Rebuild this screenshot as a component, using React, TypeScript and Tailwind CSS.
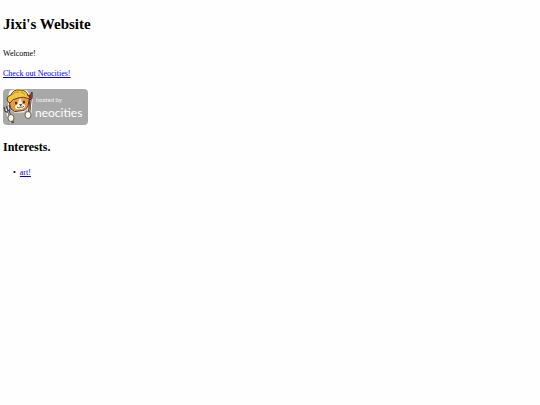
function NeocitiesBadge() {
  return (
    <svg width="85" height="36" viewBox="0 0 85 36" role="img" aria-label="hosted by neocities">
      <rect width="85" height="36" rx="4" fill="#a8a8a8" />
      <text x="33" y="13" fontSize="6" fill="#f4f4f4" fontFamily="Lato, sans-serif">hosted by</text>
      <text x="32" y="28" fontSize="12" fill="#ffffff" fontFamily="Lato, sans-serif">neocities</text>
      <g stroke="#ffffff" strokeWidth="3" strokeLinejoin="round" fill="#ffffff">
        <path d="M6 9L8 3L15 1L23 3L26 7L25 17L20 22L12 22L7 19Z" />
        <path d="M28 5L26 27M4 20L9 33" fill="none" strokeWidth="4" />
      </g>
      <path d="M5 9L8 20Q11 24 16 22Q23 22 25 17L27 6Z" fill="#ef9b3c" stroke="#493022" strokeWidth="1" />
      <path d="M16 10L18 9L19 15Q23 15 22 18Q19 21 13 20Q11 18 13 16L15 15Z" fill="#fff5e6" />
      <path d="M4 10Q4 7 8 6Q10 0 17 1Q24 1 25 7Q28 8 27 10Q20 7 15 9Q9 10 7 14Q4 13 4 10Z" fill="#f2c63d" stroke="#5c4426" strokeWidth="1" />
      <path d="M9 6Q12 2 16 3M18 3Q21 4 22 6" fill="none" stroke="#b98d25" strokeWidth="1" />
      <ellipse cx="13" cy="14" rx="1" ry="1.5" fill="#332820" />
      <ellipse cx="21" cy="13" rx="1" ry="1.5" fill="#332820" />
      <path d="M16 15.5L19 15L18 17.5Z" fill="#332820" />
      <path d="M14 18Q16 20 18 18Q20 19 21 17" fill="none" stroke="#633a2c" strokeWidth="0.8" />
      <path d="M27.5 10L25.5 29" stroke="#493022" strokeWidth="2.4" />
      <path d="M27.5 11L26 26" stroke="#b58259" strokeWidth="1" />
      <path d="M26.5 9Q27 5 29 3Q30 6 29 10Z" fill="#a92d35" stroke="#542327" strokeWidth="0.8" />
      <path d="M5 21L10 34" stroke="#494b4d" strokeWidth="2.6" />
      <path d="M1 18L2 22Q4 24 6 22Q8 20 6 16M3.5 17L5 22" fill="none" stroke="#494b4d" strokeWidth="1.3" />
      <path d="M5 22L9 32" stroke="#aeb4b7" strokeWidth="1" />
      <ellipse cx="8" cy="29" rx="3" ry="3.5" fill="#fff5e6" stroke="#5c4430" strokeWidth="0.8" />
      <ellipse cx="25" cy="26" rx="3" ry="3.5" fill="#fff5e6" stroke="#5c4430" strokeWidth="0.8" />
    </svg>
  );
}

export default function App() {
  return (
    <main className="flex min-h-screen flex-col items-start bg-[#fefefe] px-[3px] pt-3 font-['Liberation_Serif',serif] text-[8px] leading-3 text-black">
      <h1 className="text-[15px] leading-6 font-bold">Jixi's Website</h1>
      <p className="mt-3">Welcome!</p>
      <a href="#neocities" className="mt-2 text-[#0000ee] underline">Check out Neocities!</a>
      <a href="#neocities" className="mt-[9px] block">
        <NeocitiesBadge />
      </a>
      <h2 className="mt-4 text-[12px] leading-3 font-bold">Interests.</h2>
      <ul className="mt-[14px] pl-[10px]">
        <li className="flex gap-1 before:content-['•']">
          <a href="#art" className="text-[#0000ee] underline">art!</a>
        </li>
      </ul>
    </main>
  );
}
